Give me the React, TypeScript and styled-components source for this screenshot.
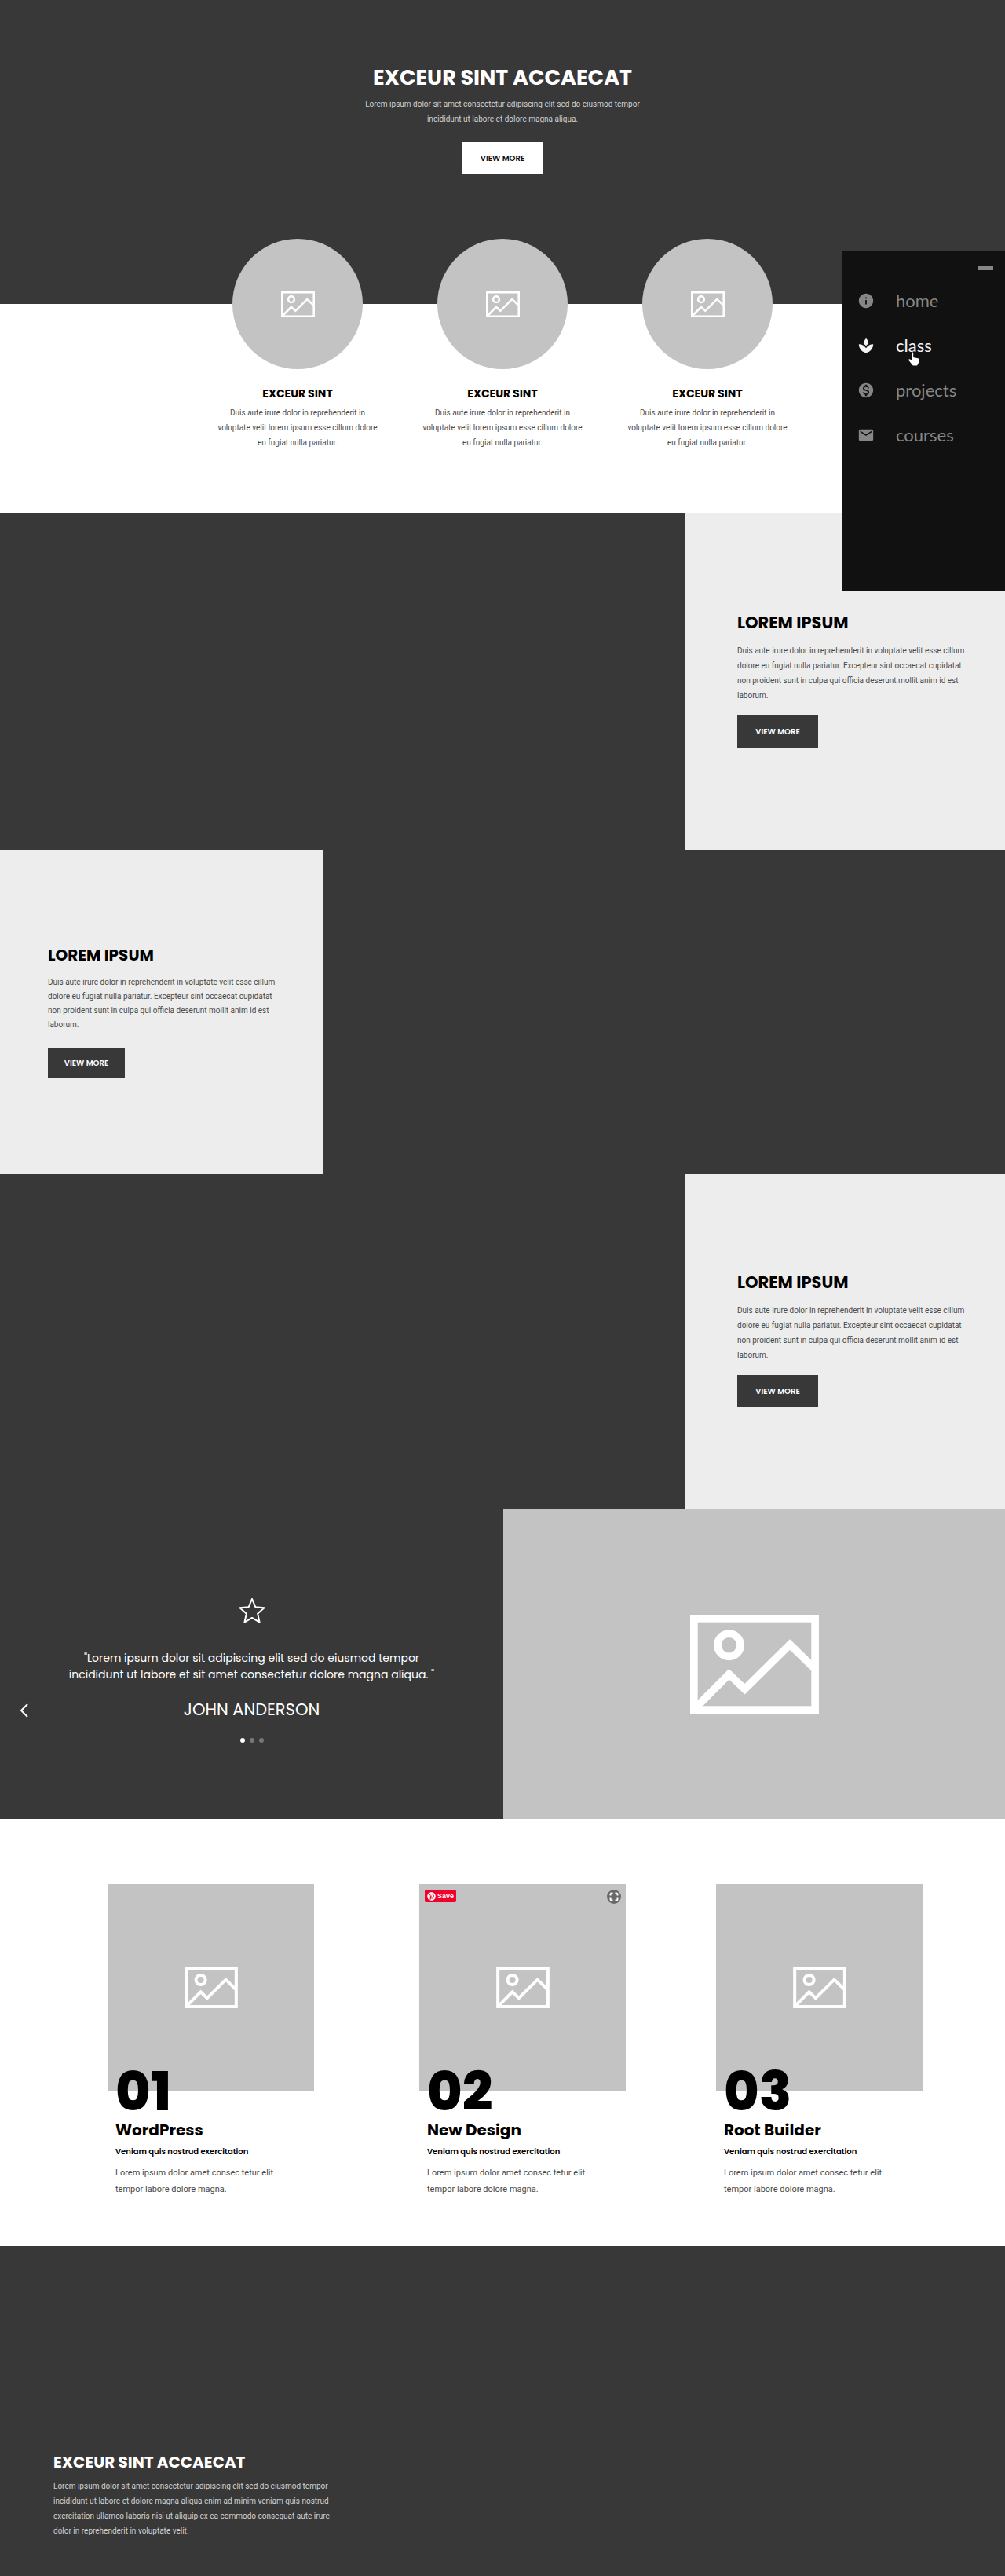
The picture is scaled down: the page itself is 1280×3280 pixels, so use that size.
import React from "react";
import styled, { createGlobalStyle } from "styled-components";
import { MdInfo, MdSpa, MdMonetizationOn, MdEmail } from "react-icons/md";
import { FaPinterest } from "react-icons/fa";

const dark = "#383838";
const grey = "#c3c3c3";
const display = `Poppins, Inter, "Open Sans", sans-serif`;
const text = `Roboto, "Noto Sans", sans-serif`;

const GlobalStyle = createGlobalStyle`
  *, *::before, *::after { box-sizing: border-box; }
  body { margin: 0; background: #fff; font-family: ${text}; }
  h1, h2, h3, p, figure, blockquote, ul { margin: 0; padding: 0; }
`;

const Page = styled.div`
  position: relative;
  width: 100%;
`;

const Heading = styled.h2<{ $size?: number; $light?: boolean }>`
  font: 700 ${(p) => p.$size ?? 21}px/28px ${display};
  color: ${(p) => (p.$light ? "#fff" : "#000")};
`;

const Copy = styled.p<{ $light?: boolean; $leading?: number; $size?: number }>`
  font: 400 ${(p) => p.$size ?? 10}px/${(p) => p.$leading ?? 19}px ${text};
  color: ${(p) => (p.$light ? "#d0d0d0" : "#4a4a4a")};
`;

const ViewMore = styled.button<{ $light?: boolean; $small?: boolean }>`
  display: block;
  width: ${(p) => (p.$small ? 98 : 103)}px;
  height: ${(p) => (p.$small ? 39 : 41)}px;
  padding: 0;
  border: 0;
  background: ${(p) => (p.$light ? "#fff" : dark)};
  color: ${(p) => (p.$light ? "#111" : "#fff")};
  font: 600 10px/12px ${display};
  cursor: pointer;
`;

const Hero = styled.header`
  display: flex;
  flex-direction: column;
  align-items: center;
  min-height: 387px;
  padding-top: 85px;
  background: ${dark};
  text-align: center;
`;

const HeroCopy = styled(Copy)`
  width: 380px;
  margin: 10px 0 20px;
`;

const Features = styled.section`
  display: grid;
  grid-template-columns: repeat(3, 261px);
  justify-content: center;
  min-height: 266px;
`;

const Feature = styled.article`
  display: flex;
  flex-direction: column;
  align-items: center;
  margin-top: -83px;
  text-align: center;
`;

const Disc = styled.div`
  display: flex;
  align-items: center;
  justify-content: center;
  width: 166px;
  height: 166px;
  border-radius: 50%;
  background: ${grey};
  margin-bottom: 17px;
`;

const FeatureCopy = styled(Copy)`
  width: 212px;
  margin-top: 1px;
`;

const Split = styled.section<{ $columns: string; $height: number }>`
  display: grid;
  grid-template-columns: ${(p) => p.$columns};
  min-height: ${(p) => p.$height}px;
  background: ${dark};
`;

const Panel = styled.article<{ $pad: string }>`
  background: #ededed;
  padding: ${(p) => p.$pad};
`;

const PanelCopy = styled(Copy)<{ $gap?: number }>`
  width: 302px;
  margin: 12px 0 ${(p) => p.$gap ?? 16}px;
`;

const Testimonial = styled.div`
  display: grid;
  grid-template-columns: 60px 1fr 60px;
  align-items: start;
  padding-top: 112px;
  color: #fff;
`;

const Previous = styled.button`
  margin: 133px 0 0 20px;
  padding: 0;
  width: 22px;
  height: 22px;
  border: 0;
  background: none;
  color: #fff;
  cursor: pointer;
`;

const Quote = styled.figure`
  display: flex;
  flex-direction: column;
  align-items: center;
  text-align: center;

  blockquote {
    width: 472px;
    margin-top: 33px;
    font: 400 14px/21px ${display};
  }

  figcaption {
    margin-top: 20px;
    font: 400 21px/28px ${display};
  }
`;

const Dots = styled.div`
  display: flex;
  gap: 6px;
  margin-top: 22px;
`;

const Dot = styled.button<{ $on?: boolean }>`
  width: 6px;
  height: 6px;
  padding: 0;
  border: 0;
  border-radius: 50%;
  background: ${(p) => (p.$on ? "#fff" : "#777")};
`;

const Picture = styled.div`
  display: flex;
  align-items: center;
  justify-content: center;
  background: ${grey};
`;

const Cards = styled.section`
  display: grid;
  grid-template-columns: 397fr 378fr 368fr;
  min-height: 544px;
  padding: 83px 0 0 137px;
`;

const Card = styled.article`
  width: 263px;
`;

const Thumb = styled(Picture)`
  position: relative;
  height: 263px;
`;

const Body = styled.div`
  position: relative;
  margin-top: -32px;
  padding: 0 28px 0 10px;
`;

const Numeral = styled.div`
  font: 800 68px/68px ${display};
  color: #000;
`;

const Subhead = styled.p`
  margin: 6px 0 9px;
  font: 600 10px/15px ${display};
  color: #000;
`;

const Save = styled.button`
  position: absolute;
  top: 7px;
  left: 7px;
  display: flex;
  align-items: center;
  gap: 2px;
  height: 16px;
  padding: 0 3px;
  border: 0;
  border-radius: 2px;
  background: #f0002a;
  color: #fff;
  font: 700 9px/16px "Liberation Sans", sans-serif;
`;

const Expand = styled.button`
  position: absolute;
  top: 7px;
  right: 6px;
  width: 18px;
  height: 18px;
  padding: 0;
  border: 0;
  background: none;

  svg { display: block; }
`;

const Footer = styled.footer`
  min-height: 420px;
  padding: 261px 68px 44px;
  background: ${dark};
`;

const FooterCopy = styled(Copy)`
  width: 366px;
  margin-top: 7px;
`;

const Menu = styled.nav`
  position: absolute;
  top: 320px;
  right: 0;
  width: 207px;
  height: 432px;
  padding: 19px 15px 0 19px;
  background: #111;

  ul { list-style: none; }
`;

const Minimise = styled.button`
  display: block;
  width: 20px;
  height: 5px;
  margin: 0 0 10px auto;
  padding: 0;
  border: 0;
  background: #868686;
`;

const MenuLink = styled.a<{ $active?: boolean }>`
  display: flex;
  align-items: center;
  gap: 27px;
  height: 57px;
  color: ${(p) => (p.$active ? "#f4f4f4" : "#868686")};
  font: 400 22px/28px Lato, sans-serif;
  text-decoration: none;
`;

const Pointer = styled.svg`
  position: absolute;
  top: 128px;
  left: 83px;
`;

function PictureIcon({ width }: { width: number }) {
  return (
    <svg width={width} height={Math.round((width * 126) / 164)} viewBox="0 0 164 126" fill="none" stroke="#fff" strokeWidth="9.7" aria-hidden="true">
      <rect x="4.85" y="4.85" width="154.3" height="116.3" />
      <circle cx="49.5" cy="38.7" r="14.6" />
      <path d="M9 116.5 49.5 75.8l20 19L127 38l32 31" />
    </svg>
  );
}

function StarIcon() {
  return (
    <svg width="34" height="34" viewBox="0 0 34 34" fill="none" stroke="#fff" strokeWidth="2" strokeLinejoin="round" aria-hidden="true">
      <path d="m17 2 4.4 10.3 11.1 1-8.4 7.4 2.5 10.9L17 25.900l-9.600 5.700 2.500-10.900-8.400-7.400 11.100-1z" />
    </svg>
  );
}

const features = ["one", "two", "three"];
const cards = [
  { number: "01", title: "WordPress" },
  { number: "02", title: "New Design", tools: true },
  { number: "03", title: "Root Builder" },
];
const links = [
  { label: "home", Icon: MdInfo },
  { label: "class", Icon: MdSpa, active: true },
  { label: "projects", Icon: MdMonetizationOn },
  { label: "courses", Icon: MdEmail },
];
const panelText =
  "Duis aute irure dolor in reprehenderit in voluptate velit esse cillum dolore eu fugiat nulla pariatur. Excepteur sint occaecat cupidatat non proident sunt in culpa qui officia deserunt mollit anim id est laborum.";

export default function App() {
  return (
    <Page>
      <GlobalStyle />
      <Hero>
        <Heading as="h1" $size={27} $light>EXCEUR SINT ACCAECAT</Heading>
        <HeroCopy $light>
          Lorem ipsum dolor sit amet consectetur adipiscing elit sed do eiusmod tempor incididunt ut labore et dolore magna aliqua.
        </HeroCopy>
        <ViewMore $light>VIEW MORE</ViewMore>
      </Hero>

      <Features>
        {features.map((key) => (
          <Feature key={key}>
            <Disc><PictureIcon width={43} /></Disc>
            <Heading as="h3" $size={14}>EXCEUR SINT</Heading>
            <FeatureCopy>
              Duis aute irure dolor in reprehenderit in voluptate velit lorem ipsum esse cillum dolore eu fugiat nulla pariatur.
            </FeatureCopy>
          </Feature>
        ))}
      </Features>

      <Split $columns="873fr 407fr" $height={429}>
        <div />
        <Panel $pad="126px 0 0 66px">
          <Heading>LOREM IPSUM</Heading>
          <PanelCopy>{panelText}</PanelCopy>
          <ViewMore>VIEW MORE</ViewMore>
        </Panel>
      </Split>

      <Split $columns="411fr 869fr" $height={413}>
        <Panel $pad="120px 0 0 61px">
          <Heading $size={20}>LOREM IPSUM</Heading>
          <PanelCopy $leading={18} $gap={20}>{panelText}</PanelCopy>
          <ViewMore $small>VIEW MORE</ViewMore>
        </Panel>
        <div />
      </Split>

      <Split $columns="873fr 407fr" $height={427}>
        <div />
        <Panel $pad="124px 0 0 66px">
          <Heading>LOREM IPSUM</Heading>
          <PanelCopy>{panelText}</PanelCopy>
          <ViewMore>VIEW MORE</ViewMore>
        </Panel>
      </Split>

      <Split $columns="641fr 639fr" $height={394}>
        <Testimonial>
          <Previous aria-label="Previous">
            <svg width="22" height="22" viewBox="0 0 22 22" fill="none" stroke="#fff" strokeWidth="2" aria-hidden="true">
              <path d="m15 3-8 8 8 8" />
            </svg>
          </Previous>
          <Quote>
            <StarIcon />
            <blockquote>
              "Lorem ipsum dolor sit adipiscing elit sed do eiusmod tempor incididunt ut labore et sit amet consectetur dolore magna aliqua. "
            </blockquote>
            <figcaption>JOHN ANDERSON</figcaption>
            <Dots>
              <Dot $on aria-label="Slide 1" />
              <Dot aria-label="Slide 2" />
              <Dot aria-label="Slide 3" />
            </Dots>
          </Quote>
        </Testimonial>
        <Picture><PictureIcon width={164} /></Picture>
      </Split>

      <Cards>
        {cards.map(({ number, title, tools }) => (
          <Card key={number}>
            <Thumb>
              <PictureIcon width={68} />
              {tools && (
                <>
                  <Save><FaPinterest size={11} />Save</Save>
                  <Expand aria-label="Expand">
                    <svg width="18" height="18" viewBox="0 0 18 18" fill="none" aria-hidden="true">
                      <circle cx="9" cy="9" r="9" fill="#696969" />
                      <path d="M4.500 7.500v-1.500q0-1.500 1.500-1.500h1.500M10.500 4.500H12q1.500 0 1.500 1.500v1.500M13.500 10.500V12q0 1.500-1.500 1.500h-1.500M7.500 13.500H6q-1.500 0-1.500-1.500v-1.500" stroke="#fff" strokeWidth="2" />
                    </svg>
                  </Expand>
                </>
              )}
            </Thumb>
            <Body>
              <Numeral>{number}</Numeral>
              <Heading as="h3" $size={20}>{title}</Heading>
              <Subhead>Veniam quis nostrud exercitation</Subhead>
              <Copy $size={11} $leading={21}>Lorem ipsum dolor amet consec tetur elit tempor labore dolore magna.</Copy>
            </Body>
          </Card>
        ))}
      </Cards>

      <Footer>
        <Heading $light $size={20}>EXCEUR SINT ACCAECAT</Heading>
        <FooterCopy $light>
          Lorem ipsum dolor sit amet consectetur adipiscing elit sed do eiusmod tempor incididunt ut labore et dolore magna aliqua enim ad minim veniam quis nostrud exercitation ullamco laboris nisi ut aliquip ex ea commodo consequat aute irure dolor in reprehenderit in voluptate velit.
        </FooterCopy>
      </Footer>

      <Menu aria-label="Main">
        <Minimise aria-label="Minimise menu" />
        <ul>
          {links.map(({ label, Icon, active }) => (
            <li key={label}>
              <MenuLink href="#" $active={active}><Icon size={22} />{label}</MenuLink>
            </li>
          ))}
        </ul>
        <Pointer width="16" height="18" viewBox="0 0 16 18" aria-hidden="true">
          <path d="M5 1.500C5 0 7.200 0 7.200 1.500V7l6 1.200c1 .2 1.500.900 1.500 1.900 0 3-.900 4.300-1.700 5.900-.5 1-1.200 1.500-2.300 1.500H7.900c-1 0-1.600-.4-2.200-1.200L1.500 11c-.9-1.300.6-2.300 1.700-1.500L5 11z" fill="#fff" />
        </Pointer>
      </Menu>
    </Page>
  );
}
